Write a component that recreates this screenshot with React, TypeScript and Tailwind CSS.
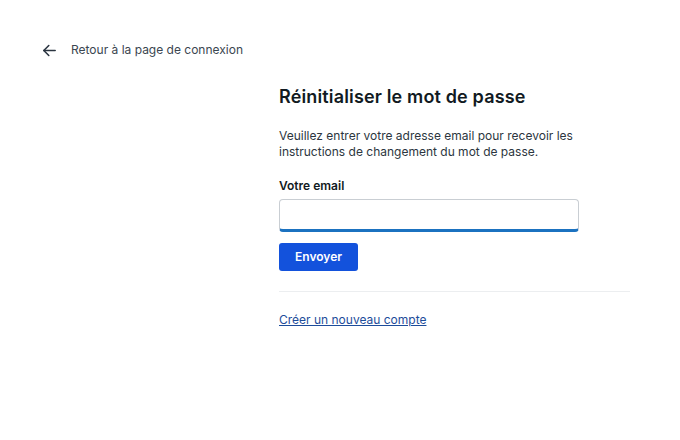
export default function App() {
  return (
    <div className="w-[680px] h-[440px] bg-white text-[#1b2733]" style={{ fontFamily: "Inter, 'Noto Sans', sans-serif" }}>
      <div className="pt-[40px] pl-[41px] flex items-center h-[20px] box-content">
        <a className="flex items-center gap-[13px] text-[12px] text-[#3b4650]" href="#">
          <svg width="17" height="17" viewBox="0 0 24 24" fill="none" stroke="#2a3440" strokeWidth="2.2" strokeLinecap="round" strokeLinejoin="round">
            <path d="M20 12H4" />
            <path d="M11 5l-7 7 7 7" />
          </svg>
          <span>Retour à la page de connexion</span>
        </a>
      </div>
      <div className="ml-[279px] w-[351px] mt-[26px]">
        <h1 className="text-[18px] font-semibold leading-[22px] tracking-[0.15px] text-[#111a22]">Réinitialiser le mot de passe</h1>
        <p className="mt-[20px] text-[12px] leading-[16px] text-[#2c3640]">
          Veuillez entrer votre adresse email pour recevoir les instructions de changement du mot de passe.
        </p>
        <label className="block mt-[18px] text-[12px] font-semibold leading-[16px] text-[#111a22]">Votre email</label>
        <input className="mt-[5px] block w-[300px] h-[33px] rounded-[4px] border border-[#c9ced3] border-b-[3px] border-b-[#1b72c0] outline-none px-2 text-[13px]" />
        <button className="mt-[11px] block h-[28px] px-[16px] rounded-[3px] bg-[#1352dc] text-white text-[12px] font-semibold">Envoyer</button>
        <div className="mt-[20px] h-px bg-[#eceef0]" />
        <a href="#" className="block mt-[20px] text-[12px] leading-[16px] text-[#1d4c9a] underline">Créer un nouveau compte</a>
      </div>
    </div>
  );
}
